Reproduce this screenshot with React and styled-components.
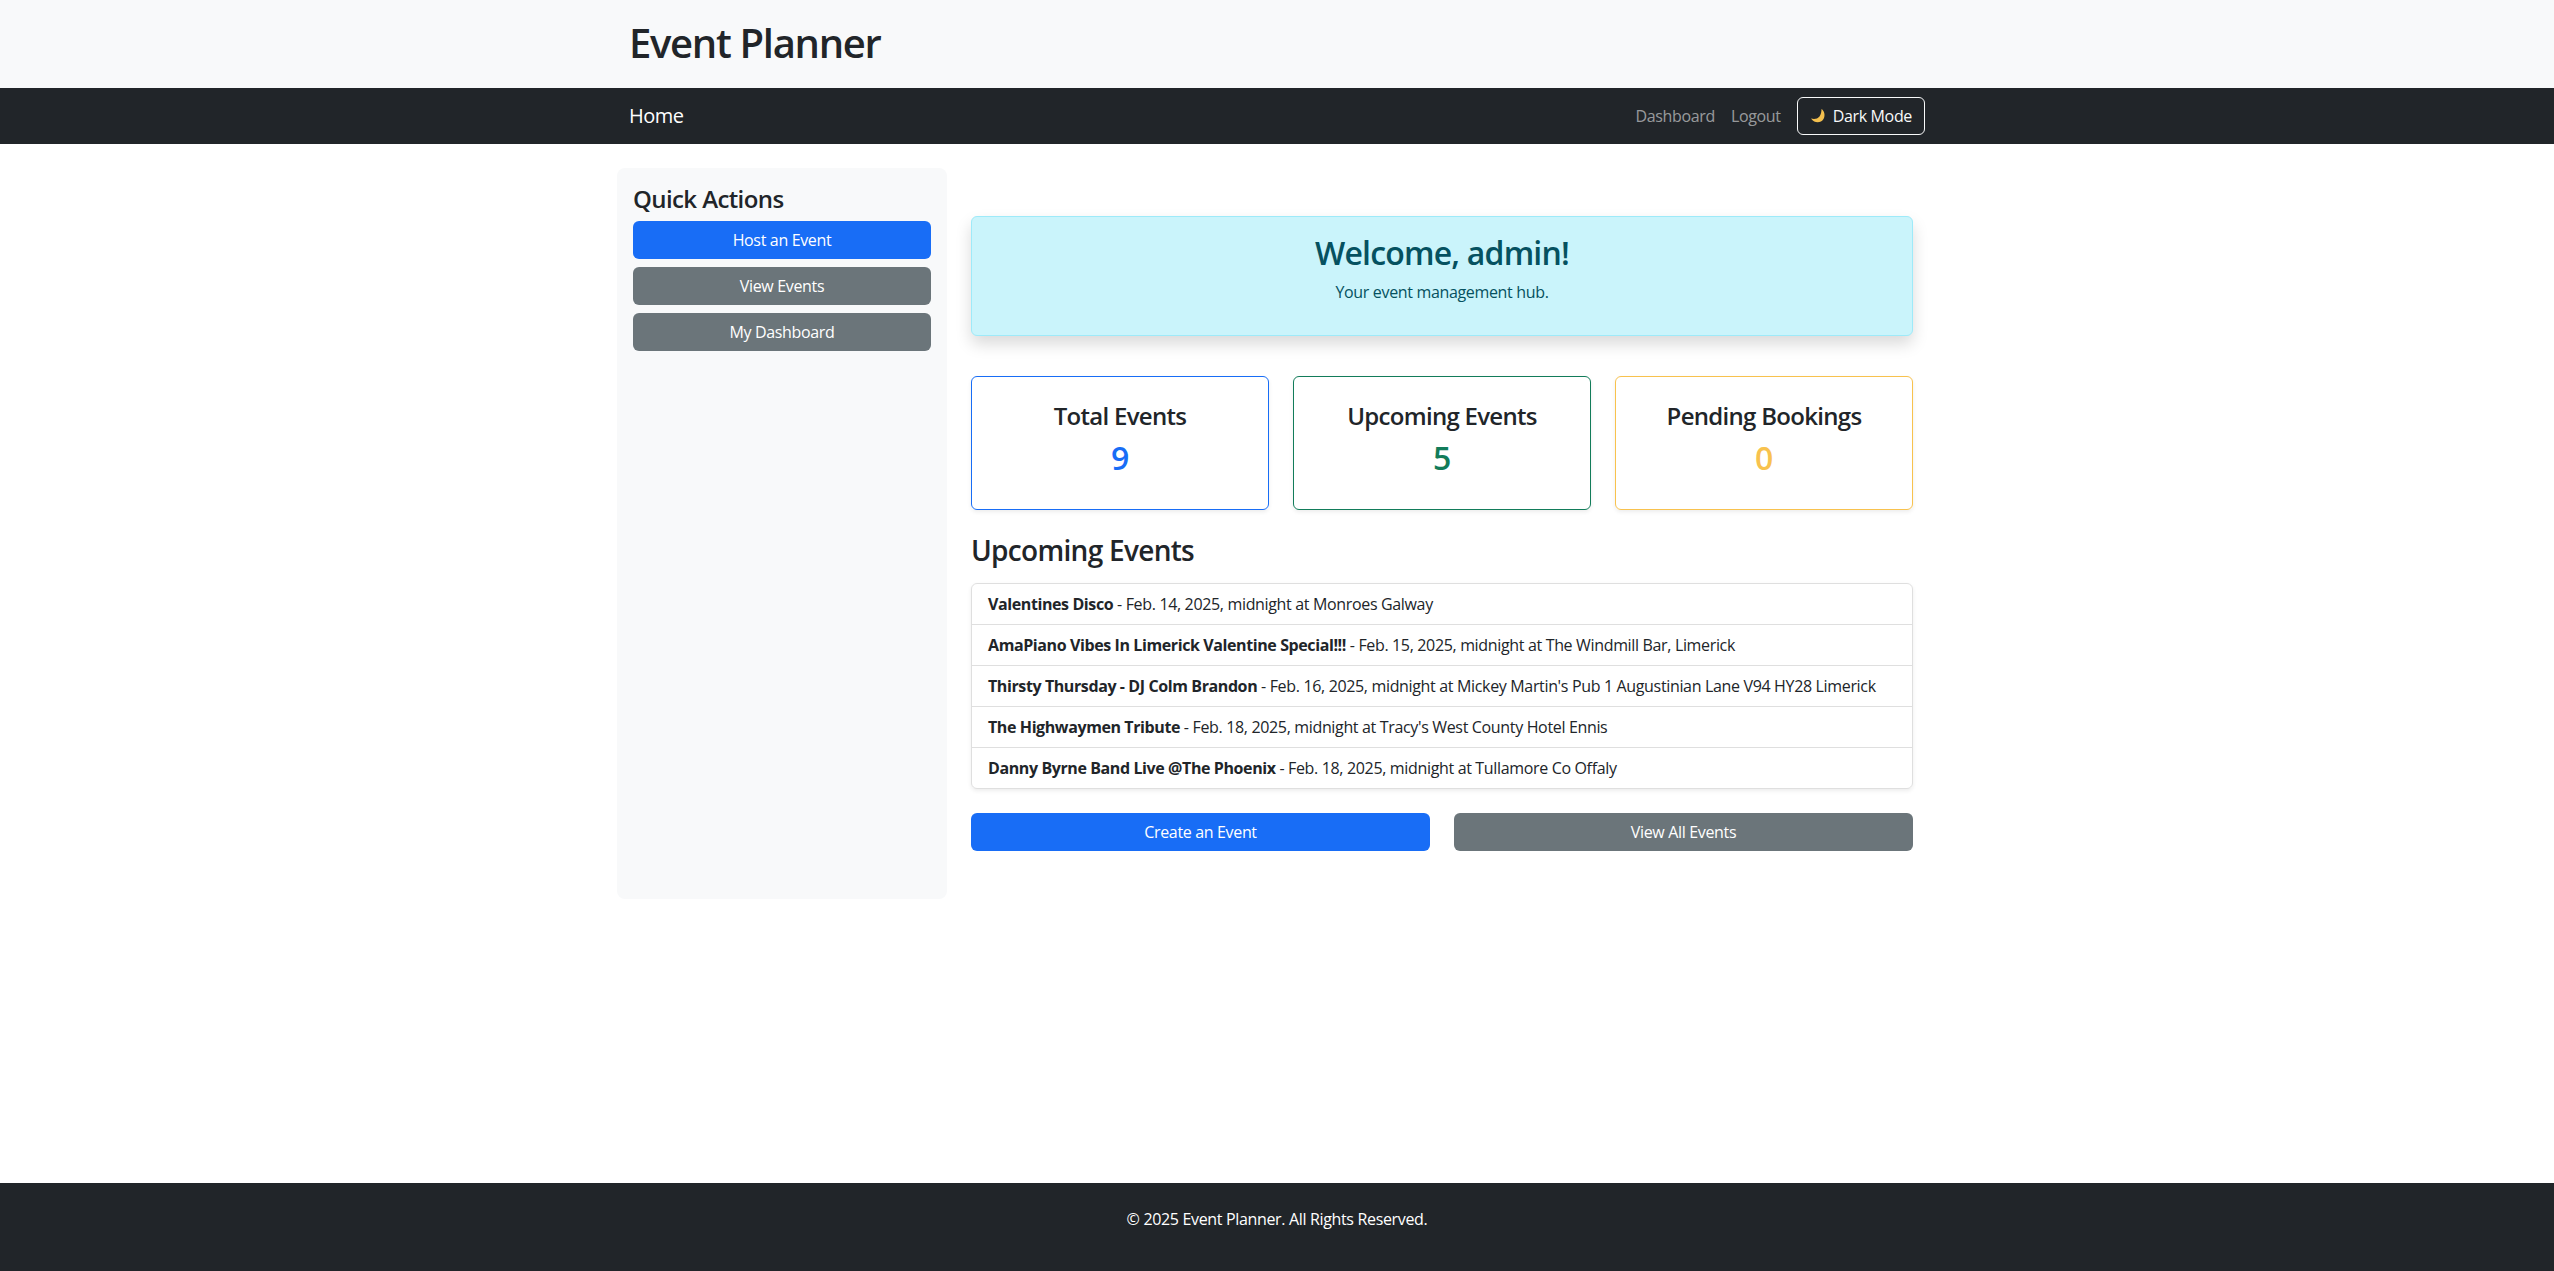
import styled, { createGlobalStyle } from "styled-components";

const GlobalStyles = createGlobalStyle`
  * {
    box-sizing: border-box;
  }

  body {
    margin: 0;
    background: #fff;
    color: #212529;
    font-family: "Open Sans", "Liberation Sans", sans-serif;
    font-size: 16px;
    line-height: 1.5;
    letter-spacing: -0.34px;
  }

  strong {
    letter-spacing: -0.4px;
  }
`;

const Page = styled.div`
  min-height: 100vh;
  display: flex;
  flex-direction: column;
`;

const Container = styled.div`
  width: 1320px;
  margin: 0 auto;
  padding: 0 12px;
`;

const Header = styled.header`
  height: 88px;
  background: #f8f9fa;
  display: flex;
  align-items: center;
`;

const SiteTitle = styled.h1`
  margin: 0 0 3px;
  font-size: 40px;
  font-weight: 600;
  line-height: 1.2;
  letter-spacing: -1.3px;
`;

const NavBar = styled.nav`
  height: 56px;
  background: #212529;
`;

const NavInner = styled(Container)`
  height: 100%;
  display: flex;
  align-items: center;
  justify-content: space-between;
`;

const Brand = styled.a`
  color: #fff;
  font-size: 20px;
  letter-spacing: -0.5px;
`;

const NavLinks = styled.div`
  display: flex;
  align-items: center;
`;

const NavLink = styled.a`
  color: rgba(255, 255, 255, 0.55);
  padding: 0 8px;
`;

const ModeButton = styled.button`
  height: 38px;
  margin-left: 8px;
  padding: 0 12px;
  display: flex;
  align-items: center;
  gap: 7px;
  background: transparent;
  border: 1px solid #f8f9fa;
  border-radius: 6px;
  color: #f8f9fa;
  font: inherit;
  letter-spacing: inherit;
`;

const Main = styled.main`
  flex: 1;
  width: 1320px;
  margin: 24px auto 0;
  display: grid;
  grid-template-columns: 330px 990px;
  align-items: start;
`;

const Sidebar = styled.aside`
  height: 731px;
  padding: 16px;
  background: #f8f9fa;
  border-radius: 8px;
`;

const SidebarTitle = styled.h4`
  margin: 1px 0 7px;
  font-size: 24px;
  font-weight: 600;
  line-height: 1.2;
  letter-spacing: -0.6px;
`;

const SidebarActions = styled.div`
  display: flex;
  flex-direction: column;
  gap: 8px;
`;

const ActionButton = styled.a`
  height: 38px;
  display: flex;
  align-items: center;
  justify-content: center;
  border-radius: 6px;
  color: #fff;
  background: ${(props) => (props.$variant === "primary" ? "#186df6" : "#6b757a")};
`;

const Content = styled.section`
  padding: 48px 24px 0;
`;

const Welcome = styled.div`
  height: 120px;
  padding: 17px 16px 16px;
  text-align: center;
  color: #055160;
  background: #caf4fb;
  border: 1px solid #9eeaf9;
  border-radius: 6px;
  box-shadow: 0 8px 16px rgba(0, 0, 0, 0.15);
`;

const WelcomeTitle = styled.h2`
  margin: 0 0 8px;
  font-size: 32px;
  font-weight: 600;
  line-height: 1.2;
  letter-spacing: -0.8px;
`;

const WelcomeText = styled.p`
  margin: 0;
`;

const Stats = styled.div`
  margin-top: 40px;
  display: grid;
  grid-template-columns: repeat(3, 298px);
  gap: 24px;
`;

const StatCard = styled.div`
  height: 134px;
  padding: 25px 16px 0;
  text-align: center;
  border: 1px solid ${(props) => props.$color};
  border-radius: 6px;
  box-shadow: 0 2px 4px rgba(0, 0, 0, 0.075);
`;

const StatTitle = styled.h4`
  margin: 0 0 8px;
  font-size: 24px;
  font-weight: 600;
  line-height: 1.2;
  letter-spacing: -0.7px;
`;

const StatValue = styled.div`
  color: ${(props) => props.$color};
  font-size: 32px;
  font-weight: 600;
  line-height: 1.2;
`;

const SectionTitle = styled.h3`
  margin: 24px 0 15px;
  font-size: 28px;
  font-weight: 600;
  line-height: 1.2;
  letter-spacing: -0.7px;
`;

const EventList = styled.ul`
  margin: 0;
  padding: 0;
  list-style: none;
  border: 1px solid rgba(0, 0, 0, 0.125);
  border-radius: 6px;
  box-shadow: 0 2px 4px rgba(0, 0, 0, 0.075);
`;

const EventItem = styled.li`
  height: 41px;
  padding: 0 16px;
  display: flex;
  align-items: center;
  white-space: pre;
  border-top: 1px solid rgba(0, 0, 0, 0.125);

  &:first-child {
    height: 40px;
    border-top: 0;
  }
`;

const FooterActions = styled.div`
  margin-top: 24px;
  display: grid;
  grid-template-columns: 1fr 1fr;
  gap: 24px;
`;

const Footer = styled.footer`
  height: 88px;
  padding-top: 24px;
  background: #212529;
  color: #fff;
  text-align: center;
`;

const MoonIcon = () => (
  <svg width="16" height="16" viewBox="0 0 16 16">
    <path
      d="M11.5 1C14.5 3 15.5 7.5 13.5 11 11 15 5 16 1 10.5 4 11.5 7.5 11 9.5 8.5 11 6.5 11.5 3.5 11.5 1Z"
      fill="#f4c04e"
    />
  </svg>
);

const events = [
  ["Valentines Disco", "Feb. 14, 2025, midnight at Monroes Galway"],
  ["AmaPiano Vibes In Limerick Valentine Special!!!", "Feb. 15, 2025, midnight at The Windmill Bar, Limerick"],
  ["Thirsty Thursday - DJ Colm Brandon", "Feb. 16, 2025, midnight at Mickey Martin's Pub 1 Augustinian Lane V94 HY28 Limerick"],
  ["The Highwaymen Tribute", "Feb. 18, 2025, midnight at Tracy's West County Hotel Ennis"],
  ["Danny Byrne Band Live @The Phoenix", "Feb. 18, 2025, midnight at Tullamore Co Offaly"],
];

const stats = [
  { title: "Total Events", value: 9, color: "#186df6" },
  { title: "Upcoming Events", value: 5, color: "#127c5a" },
  { title: "Pending Bookings", value: 0, color: "#f8c24e" },
];

function App() {
  return (
    <>
      <GlobalStyles />
      <Page>
        <Header>
          <Container>
            <SiteTitle>Event Planner</SiteTitle>
          </Container>
        </Header>

        <NavBar>
          <NavInner>
            <Brand>Home</Brand>
            <NavLinks>
              <NavLink>Dashboard</NavLink>
              <NavLink>Logout</NavLink>
              <ModeButton>
                <MoonIcon />
                Dark Mode
              </ModeButton>
            </NavLinks>
          </NavInner>
        </NavBar>

        <Main>
          <Sidebar>
            <SidebarTitle>Quick Actions</SidebarTitle>
            <SidebarActions>
              <ActionButton $variant="primary">Host an Event</ActionButton>
              <ActionButton>View Events</ActionButton>
              <ActionButton>My Dashboard</ActionButton>
            </SidebarActions>
          </Sidebar>

          <Content>
            <Welcome>
              <WelcomeTitle>Welcome, admin!</WelcomeTitle>
              <WelcomeText>Your event management hub.</WelcomeText>
            </Welcome>

            <Stats>
              {stats.map((stat) => (
                <StatCard key={stat.title} $color={stat.color}>
                  <StatTitle>{stat.title}</StatTitle>
                  <StatValue $color={stat.color}>{stat.value}</StatValue>
                </StatCard>
              ))}
            </Stats>

            <SectionTitle>Upcoming Events</SectionTitle>
            <EventList>
              {events.map(([name, details]) => (
                <EventItem key={name}>
                  <strong>{name}</strong>
                  {" - "}
                  {details}
                </EventItem>
              ))}
            </EventList>

            <FooterActions>
              <ActionButton $variant="primary">Create an Event</ActionButton>
              <ActionButton>View All Events</ActionButton>
            </FooterActions>
          </Content>
        </Main>

        <Footer>© 2025 Event Planner. All Rights Reserved.</Footer>
      </Page>
    </>
  );
}

export default App;
